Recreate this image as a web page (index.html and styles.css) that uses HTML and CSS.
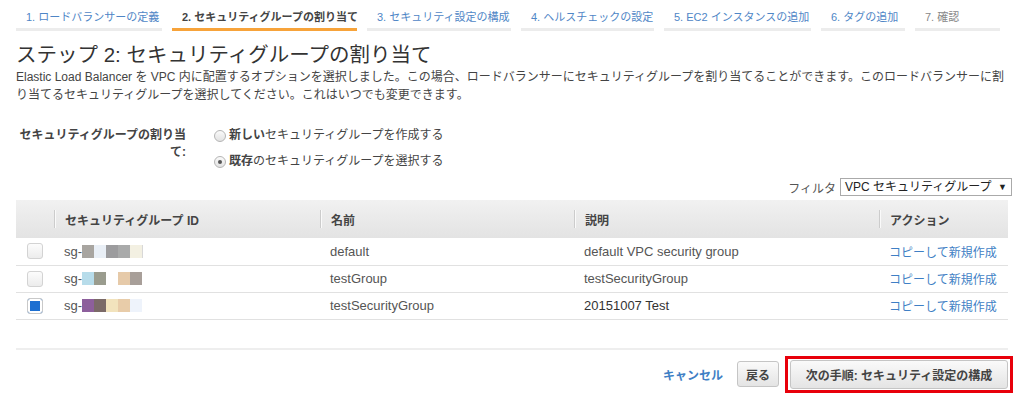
FILE: index.html
```html
<!DOCTYPE html>
<html lang="ja">
<head>
    <meta charset="UTF-8">
    <title>ステップ 2: セキュリティグループの割り当て</title>
    <link rel="stylesheet" href="styles.css">
</head>
<body>
    <ul class="wizard-steps">
        <li class="step">1. ロードバランサーの定義</li>
        <li class="step active">2. セキュリティグループの割り当て</li>
        <li class="step">3. セキュリティ設定の構成</li>
        <li class="step">4. ヘルスチェックの設定</li>
        <li class="step">5. EC2 インスタンスの追加</li>
        <li class="step">6. タグの追加</li>
        <li class="step disabled">7. 確認</li>
    </ul>

    <h1 class="page-title">ステップ 2: セキュリティグループの割り当て</h1>
    <p class="description">Elastic Load Balancer を VPC 内に配置するオプションを選択しました。この場合、ロードバランサーにセキュリティグループを割り当てることができます。このロードバランサーに割り当てるセキュリティグループを選択してください。これはいつでも変更できます。</p>

    <div class="form-row">
        <div class="form-label">セキュリティグループの割り当て:</div>
        <div class="radio-group">
            <label class="radio"><span class="radio-dot"></span><b>新しい</b>セキュリティグループを作成する</label>
            <label class="radio"><span class="radio-dot checked"></span><b>既存</b>のセキュリティグループを選択する</label>
        </div>
    </div>

    <div class="filter-bar">
        <span class="filter-label">フィルタ</span>
        <div class="select">VPC セキュリティグループ <span class="caret">▼</span></div>
    </div>

    <table class="sg-table">
        <thead>
            <tr>
                <th class="col-check"></th>
                <th class="col-id"><span class="divider"></span>セキュリティグループ ID</th>
                <th class="col-name"><span class="divider"></span>名前</th>
                <th class="col-desc"><span class="divider"></span>説明</th>
                <th class="col-action"><span class="divider"></span>アクション</th>
            </tr>
        </thead>
        <tbody>
            <tr>
                <td class="col-check"><span class="checkbox"></span></td>
                <td class="col-id">sg-<span class="mask">
                    <i style="background:#a8a5a0"></i><i style="background:#e9eff6"></i><i style="background:#9c9c9e"></i><i style="background:#a9aaaa"></i><i style="background:#f3f0e2"></i><i class="thin" style="background:#d8d8d8"></i>
                </span></td>
                <td>default</td>
                <td>default VPC security group</td>
                <td class="col-action"><a href="#" class="link">コピーして新規作成</a></td>
            </tr>
            <tr>
                <td class="col-check"><span class="checkbox"></span></td>
                <td class="col-id">sg-<span class="mask">
                    <i style="background:#b7dcea"></i><i style="background:#9a9c8e"></i><i style="background:#ffffff"></i><i style="background:#e6caa9"></i><i style="background:#a89f99"></i>
                </span></td>
                <td>testGroup</td>
                <td>testSecurityGroup</td>
                <td class="col-action"><a href="#" class="link">コピーして新規作成</a></td>
            </tr>
            <tr>
                <td class="col-check"><span class="checkbox checked"></span></td>
                <td class="col-id">sg-<span class="mask">
                    <i style="background:#8d5f9c"></i><i style="background:#7b6a68"></i><i style="background:#f2e3bd"></i><i style="background:#e8cca9"></i><i style="background:#eef3fb"></i>
                </span></td>
                <td>testSecurityGroup</td>
                <td class="dark">20151007 Test</td>
                <td class="col-action"><a href="#" class="link">コピーして新規作成</a></td>
            </tr>
        </tbody>
    </table>

    <div class="footer">
        <a href="#" class="cancel">キャンセル</a>
        <button class="btn">戻る</button>
        <span class="highlight"><button class="btn primary">次の手順: セキュリティ設定の構成</button></span>
    </div>
</body>
</html>
```

FILE: styles.css
```css
body {
    margin: 0;
    padding: 0 16px;
    font-family: "Liberation Sans", "Noto Sans CJK JP", sans-serif;
    font-size: 12px;
    color: #444;
    background: #fff;
}

.wizard-steps {
    list-style: none;
    margin: 8px 0 0;
    padding: 0;
    display: grid;
    grid-template-columns: 146px 185px 144px 133px 147px 84px 85px;
    column-gap: 10px;
}

.step {
    font-size: 11px;
    line-height: 18px;
    padding: 0 0 2px 10px;
    color: #4f86c6;
    border-bottom: 3px solid #ececec;
    white-space: nowrap;
}

.step.active {
    color: #444;
    font-weight: bold;
    border-bottom-color: #f7a33a;
}

.step.disabled {
    color: #888;
}

.page-title {
    margin: 11px 0 0;
    font-size: 20.5px;
    font-weight: normal;
    line-height: 26px;
    color: #333;
}

.description {
    margin: 0;
    line-height: 18px;
    color: #444;
}

.form-row {
    display: flex;
    gap: 28px;
    margin-top: 23px;
}

.form-label {
    width: 170px;
    text-align: right;
    font-weight: bold;
    line-height: 17px;
    color: #444;
}

.radio-group {
    display: flex;
    flex-direction: column;
    gap: 9px;
}

.radio {
    display: flex;
    align-items: center;
    font-size: 12px;
    line-height: 17px;
    color: #444;
}

.radio-dot {
    width: 10px;
    height: 10px;
    border: 1px solid #b5b5b5;
    border-radius: 50%;
    background: linear-gradient(#fafafa, #e2e2e2);
    margin-right: 3px;
    position: relative;
}

.radio-dot.checked::after {
    content: "";
    position: absolute;
    left: 3px;
    top: 3px;
    width: 4px;
    height: 4px;
    border-radius: 50%;
    background: #555;
}

.filter-bar {
    display: flex;
    justify-content: flex-end;
    align-items: center;
    gap: 4px;
    margin-top: 8px;
    margin-right: -4px;
}

.filter-label {
    color: #555;
}

.select {
    width: 162px;
    height: 16px;
    border: 1px solid #aaa;
    padding: 0 4px;
    line-height: 16px;
    font-size: 12px;
    color: #222;
    display: flex;
    justify-content: space-between;
}

.caret {
    font-size: 9px;
}

.sg-table {
    width: 992px;
    margin-top: 4px;
    border-collapse: collapse;
    table-layout: fixed;
}

.sg-table th,
.sg-table td {
    box-sizing: border-box;
    white-space: nowrap;
}

.sg-table th {
    height: 38px;
    padding: 0 0 0 11px;
    text-align: left;
    font-weight: bold;
    font-size: 12px;
    color: #444;
    background: linear-gradient(#f1f1f1, #e3e3e3);
    position: relative;
}

.sg-table .divider {
    position: absolute;
    left: 0;
    top: 10px;
    height: 18px;
    border-left: 1px solid #ccc;
    border-right: 1px solid #fafafa;
}

.col-check { width: 38px; }
.col-id { width: 266px; }
.col-name { width: 254px; }
.col-desc { width: 305px; }
.col-action { width: 129px; }

.sg-table td {
    height: 27px;
    padding: 0 0 0 10px;
    border-bottom: 1px solid #e1e1e1;
    font-size: 13px;
    color: #555;
}

.sg-table td.col-check {
    padding-left: 11px;
}

.sg-table td.dark {
    color: #333;
}

.checkbox {
    display: block;
    width: 14px;
    height: 14px;
    border: 1px solid #d3d3d3;
    border-radius: 3px;
    background: linear-gradient(#fcfcfc, #ececec);
}

.checkbox.checked {
    background: #1d6fd1;
    border-color: #c9c9c9;
    box-shadow: inset 0 0 0 2px #fff;
}

.mask {
    display: inline-flex;
    vertical-align: -2px;
}

.mask i {
    display: block;
    width: 12px;
    height: 13px;
}

.mask i.thin {
    width: 1px;
}

.link {
    color: #3f7fc5;
    text-decoration: none;
    font-size: 12px;
}

.footer {
    margin-top: 28px;
    border-top: 2px solid #eee;
    display: flex;
    justify-content: flex-end;
    align-items: center;
    padding-top: 6px;
}

.cancel {
    color: #3f7fc5;
    text-decoration: none;
    font-weight: bold;
    font-size: 12px;
    margin-right: 14px;
}

.btn {
    font-family: inherit;
    font-size: 12px;
    font-weight: bold;
    color: #444;
    height: 26px;
    padding: 0 8px;
    border: 1px solid #c5c5c5;
    border-radius: 3px;
    background: linear-gradient(#fafafa, #e4e4e4);
}

.btn.primary {
    height: 29px;
    padding: 0 10px;
    width: 218px;
}

.highlight {
    display: inline-block;
    border: 3px solid #e8000b;
    padding: 1px 2px;
    margin-left: 6px;
    margin-right: -5px;
}
```
